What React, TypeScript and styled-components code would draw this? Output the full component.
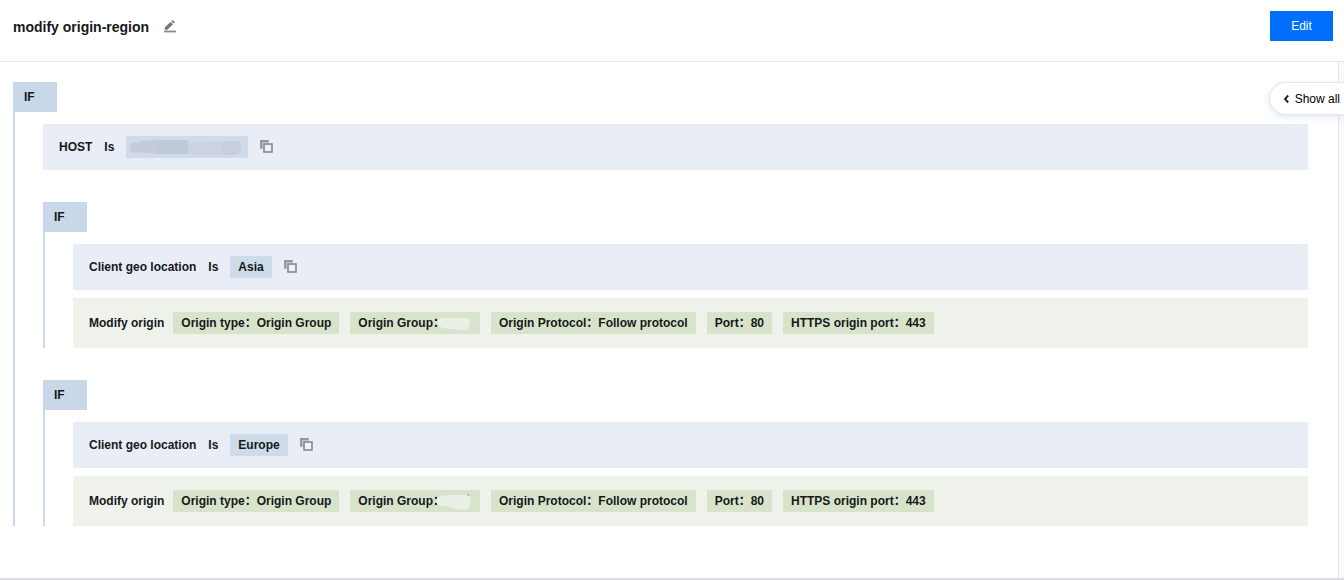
import React from "react";
import styled, { createGlobalStyle } from "styled-components";

const GlobalStyle = createGlobalStyle`
  *, *::before, *::after { box-sizing: border-box; }
  body {
    margin: 0;
    background: #ffffff;
    color: #16181a;
    font: 400 12px/22px "Liberation Sans", Arial, "Noto Sans CJK SC", sans-serif;
  }
`;

const Page = styled.div`
  position: relative;
  border-bottom: 2px solid #dcdce2;
`;

const Header = styled.header`
  display: flex;
  align-items: flex-start;
  padding: 11px 11px 18px 13px;
  border-bottom: 1px solid #e5e5e5;
`;

const Heading = styled.div`
  display: flex;
  align-items: center;
  gap: 15px;
`;

const Title = styled.h1`
  margin: 0;
  font-size: 14px;
  font-weight: 700;
  line-height: 32px;
`;

const IconButton = styled.button`
  display: flex;
  margin: 0;
  padding: 0;
  border: 0;
  background: none;
  cursor: pointer;
`;

const EditButton = styled.button`
  margin-left: auto;
  height: 30px;
  padding: 0 20px;
  min-width: 63px;
  border: 0;
  background: #006eff;
  color: #ffffff;
  font: inherit;
  cursor: pointer;
`;

const Body = styled.div`
  display: flex;
`;

const Rules = styled.main`
  flex: 1;
  min-width: 0;
  padding: 20px 30px 52px 13px;
`;

const SideStrip = styled.aside`
  width: 6px;
  border-left: 1px solid #e5e5e5;
  background: #fafafa;
`;

const ShowAll = styled.button`
  position: absolute;
  top: 82px;
  right: 0;
  display: flex;
  align-items: center;
  gap: 4px;
  height: 33px;
  padding: 0 4px 0 13px;
  border: 1px solid #e1e6ef;
  border-right: 0;
  border-radius: 17px 0 0 17px;
  background: #ffffff;
  box-shadow: 0 2px 6px rgba(54, 88, 140, 0.14);
  color: #000000;
  font: inherit;
  white-space: nowrap;
  cursor: pointer;
`;

const Group = styled.section`
  border-left: 2px solid #c9d8ea;
`;

const IfTag = styled.div`
  width: 44px;
  margin-left: -2px;
  padding-left: 11px;
  background: #c9d8e8;
  font-weight: 700;
  line-height: 30px;
`;

const GroupBody = styled.div`
  display: flex;
  flex-direction: column;
  gap: 32px;
  padding: 12px 0 0 28px;
`;

const RowStack = styled.div`
  display: flex;
  flex-direction: column;
  gap: 8px;
`;

const Row = styled.div`
  display: flex;
  align-items: center;
  font-weight: 700;
  white-space: nowrap;
`;

const ConditionRow = styled(Row)`
  gap: 12px;
  padding: 12px 16px;
  background: #e9edf5;
`;

const ActionRow = styled(Row)`
  gap: 9px;
  padding: 14px 16px;
  background: #eff2eb;
`;

const ChipList = styled.div`
  display: flex;
  gap: 11px;
`;

const Chip = styled.span<{ $kind: "condition" | "action"; $inset?: number }>`
  display: flex;
  align-items: center;
  height: 22px;
  padding: 0 ${(p) => p.$inset ?? 8}px;
  background: ${(p) => (p.$kind === "condition" ? "#cedbe9" : "#d7e4cb")};
`;

const Smudge = styled.svg`
  display: block;
  flex: none;
`;

const GroupMask = styled.span`
  margin-left: -9px;
`;

const PencilIcon = () => (
  <svg width="12" height="14" viewBox="0 0 12 14" aria-hidden="true">
    <path d="M0.8 9.8V7.2L6.6 1.9L9 4.3L3.4 9.8Z" fill="#777" />
    <path d="M7.4 1.2L8.7 0L11 2.3L9.8 3.6Z" fill="#777" />
    <path d="M0 10.6H12V12.4H0Z" fill="#8a8a8a" />
  </svg>
);

const CopyIcon = () => (
  <svg width="13" height="14" viewBox="0 0 13 14" aria-hidden="true">
    <path d="M0 0H9V3H3V9H0Z" fill="#bfc1c4" />
    <path d="M1 8.5V1H8.5" fill="none" stroke="#85878a" strokeWidth="1.3" />
    <rect x="4" y="4" width="8" height="8" fill="#f1f2f4" stroke="#85878a" strokeWidth="1.6" />
  </svg>
);

const HostSmudge = () => (
  <Smudge width="114" height="16" viewBox="0 0 114 16" role="img" aria-label="Hidden host">
    <path d="M3 4Q7 4 10 2Q18 1 30 1H58V15H28Q18 14 11 13Q8 14 5 14Q0 13 0 8Q0 5 3 4Z" fill="#c5cbdb" />
    <path d="M25 1H58V15H28L25 14Z" fill="#bfc9d8" />
    <path d="M58 3Q80 4 92 2H108Q112 4 111 9Q110 16 105 16Q80 16 58 15Z" fill="#cbd2e2" />
    <path d="M92 2H108Q112 4 111 9Q110 16 105 16H92Z" fill="#c7cfdf" />
  </Smudge>
);

const GroupSmudge = ({ tall }: { tall?: boolean }) => (
  <Smudge width="36" height="18" viewBox="0 0 36 18" role="img" aria-label="Hidden group">
    <path
      d={
        tall
          ? "M1 6Q3 4 7 4Q20 2 31 3Q35 4 35 9Q34 16 30 18Q20 18 11 14Q4 15 1 12Q0 9 1 6Z"
          : "M4 4H32Q35 6 34 11Q32 16 28 16Q17 16 9 14Q4 14 2 11Q0 7 4 4Z"
      }
      fill="#ebf0e7"
    />
    {tall && <path d="M31 2L33 3V4Z" fill="#4a5148" />}
  </Smudge>
);

interface LocationRuleProps {
  location: string;
  tall?: boolean;
}

const LocationRule = ({ location, tall }: LocationRuleProps) => (
  <Group>
    <IfTag>IF</IfTag>
    <GroupBody>
      <RowStack>
        <ConditionRow>
          <span>Client geo location</span>
          <span>Is</span>
          <Chip $kind="condition">{location}</Chip>
          <IconButton type="button" aria-label={`Copy ${location}`}>
            <CopyIcon />
          </IconButton>
        </ConditionRow>
        <ActionRow>
          <span>Modify origin</span>
          <ChipList>
            <Chip $kind="action">Origin type：Origin Group</Chip>
            <Chip $kind="action">
              Origin Group：
              <GroupMask>
                <GroupSmudge tall={tall} />
              </GroupMask>
            </Chip>
            <Chip $kind="action">Origin Protocol：Follow protocol</Chip>
            <Chip $kind="action">Port：80</Chip>
            <Chip $kind="action">HTTPS origin port：443</Chip>
          </ChipList>
        </ActionRow>
      </RowStack>
    </GroupBody>
  </Group>
);

export default function App() {
  return (
    <>
      <GlobalStyle />
      <Page>
        <Header>
          <Heading>
            <Title>modify origin-region</Title>
            <IconButton type="button" aria-label="Rename">
              <PencilIcon />
            </IconButton>
          </Heading>
          <EditButton type="button">Edit</EditButton>
        </Header>
        <Body>
          <Rules>
            <Group>
              <IfTag>IF</IfTag>
              <GroupBody>
                <ConditionRow>
                  <span>HOST</span>
                  <span>Is</span>
                  <Chip $kind="condition" $inset={4}>
                    <HostSmudge />
                  </Chip>
                  <IconButton type="button" aria-label="Copy host">
                    <CopyIcon />
                  </IconButton>
                </ConditionRow>
                <LocationRule location="Asia" />
                <LocationRule location="Europe" tall />
              </GroupBody>
            </Group>
          </Rules>
          <SideStrip />
        </Body>
        <ShowAll type="button">
          <svg width="8" height="10" viewBox="0 0 8 10" aria-hidden="true">
            <path d="M5.2 1.5L2 5L5.2 8.5" fill="none" stroke="#222" strokeWidth="1.9" />
          </svg>
          Show all
        </ShowAll>
      </Page>
    </>
  );
}
